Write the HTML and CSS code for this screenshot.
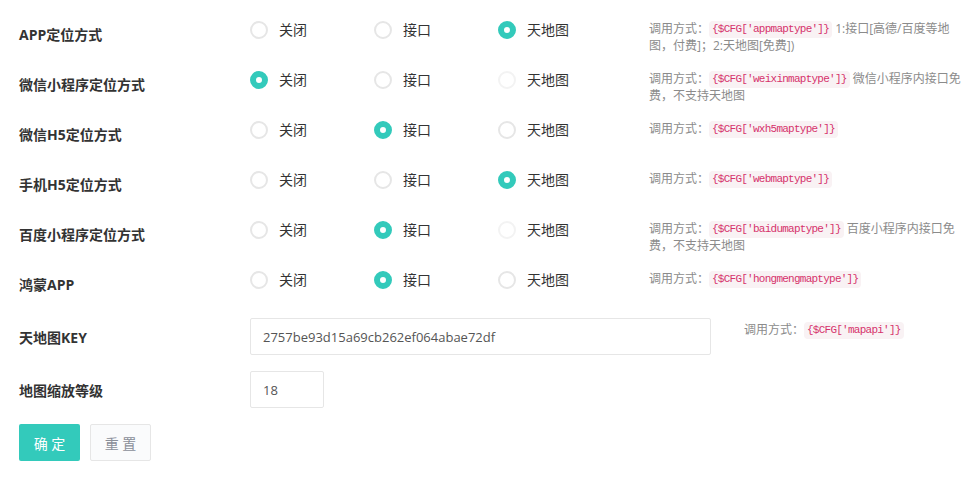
FILE: index.html
```html
<!DOCTYPE html>
<html lang="zh-CN">
<head>
    <meta charset="UTF-8">
    <meta name="viewport" content="width=device-width, initial-scale=1.0">
    <title>地图设置</title>
    <link rel="stylesheet" href="styles.css">
</head>
<body>
    <form class="config-form">
        <div class="form-item">
            <label class="form-label">APP定位方式</label>
            <div class="radio-group">
                <span class="radio"><i class="dot"></i>关闭</span>
                <span class="radio"><i class="dot"></i>接口</span>
                <span class="radio"><i class="dot on"></i>天地图</span>
            </div>
            <div class="form-tip">调用方式：<code>{$CFG['appmaptype']}</code> 1:接口[高德/百度等地图，付费]；2:天地图[免费])</div>
        </div>
        <div class="form-item">
            <label class="form-label">微信小程序定位方式</label>
            <div class="radio-group">
                <span class="radio"><i class="dot on"></i>关闭</span>
                <span class="radio"><i class="dot"></i>接口</span>
                <span class="radio"><i class="dot off"></i>天地图</span>
            </div>
            <div class="form-tip">调用方式：<code>{$CFG['weixinmaptype']}</code> 微信小程序内接口免费，不支持天地图</div>
        </div>
        <div class="form-item">
            <label class="form-label">微信H5定位方式</label>
            <div class="radio-group">
                <span class="radio"><i class="dot"></i>关闭</span>
                <span class="radio"><i class="dot on"></i>接口</span>
                <span class="radio"><i class="dot"></i>天地图</span>
            </div>
            <div class="form-tip">调用方式：<code>{$CFG['wxh5maptype']}</code></div>
        </div>
        <div class="form-item">
            <label class="form-label">手机H5定位方式</label>
            <div class="radio-group">
                <span class="radio"><i class="dot"></i>关闭</span>
                <span class="radio"><i class="dot"></i>接口</span>
                <span class="radio"><i class="dot on"></i>天地图</span>
            </div>
            <div class="form-tip">调用方式：<code>{$CFG['webmaptype']}</code></div>
        </div>
        <div class="form-item">
            <label class="form-label">百度小程序定位方式</label>
            <div class="radio-group">
                <span class="radio"><i class="dot"></i>关闭</span>
                <span class="radio"><i class="dot on"></i>接口</span>
                <span class="radio"><i class="dot off"></i>天地图</span>
            </div>
            <div class="form-tip">调用方式：<code>{$CFG['baidumaptype']}</code> 百度小程序内接口免费，不支持天地图</div>
        </div>
        <div class="form-item">
            <label class="form-label">鸿蒙APP</label>
            <div class="radio-group">
                <span class="radio"><i class="dot"></i>关闭</span>
                <span class="radio"><i class="dot on"></i>接口</span>
                <span class="radio"><i class="dot"></i>天地图</span>
            </div>
            <div class="form-tip">调用方式：<code>{$CFG['hongmengmaptype']}</code></div>
        </div>
        <div class="form-item input-row">
            <label class="form-label">天地图KEY</label>
            <input class="input input-key" type="text" value="2757be93d15a69cb262ef064abae72df">
            <div class="form-tip tip-side">调用方式：<code>{$CFG['mapapi']}</code></div>
        </div>
        <div class="form-item input-row">
            <label class="form-label">地图缩放等级</label>
            <input class="input input-zoom" type="text" value="18">
        </div>
        <div class="form-item input-row">
            <button type="button" class="btn btn-primary">确 定</button>
            <button type="reset" class="btn btn-default">重 置</button>
        </div>
    </form>
</body>
</html>
```

FILE: styles.css
```css
body {
    margin: 0;
    font-family: "Open Sans", "Noto Sans CJK SC", sans-serif;
    font-size: 14px;
    color: #333;
    background: #fff;
}
.config-form {
    padding: 5px 0 0 19px;
}
.form-item {
    display: flex;
    align-items: flex-start;
    height: 50px;
}
.form-label {
    width: 231px;
    flex-shrink: 0;
    margin-top: 20px;
    line-height: 20px;
    font-weight: bold;
}
.radio-group {
    display: flex;
    width: 399px;
    flex-shrink: 0;
    margin-top: 15px;
}
.radio {
    display: flex;
    align-items: center;
    width: 124px;
    line-height: 20px;
}
.radio:last-child {
    width: 151px;
}
.dot {
    box-sizing: border-box;
    width: 18px;
    height: 18px;
    margin-right: 11px;
    border: 2px solid #e6e6e6;
    border-radius: 50%;
}
.dot.on {
    border: 6px solid #33cabb;
    background: #fff;
}
.dot.off {
    border-color: #f3f3f3;
}
.form-tip {
    width: 318px;
    margin-top: 16px;
    font-size: 12px;
    line-height: 16px;
    color: #8b8b8b;
}
code {
    display: inline-block;
    padding: 0 3px;
    line-height: 17px;
    vertical-align: top;
    font-family: "Liberation Mono", monospace;
    font-size: 11px;
    letter-spacing: -0.75px;
    color: #d6336c;
    background: #f9f2f4;
    border-radius: 4px;
}
.input-row {
    align-items: center;
    height: 53px;
}
.config-form .input-row:nth-child(7) {
    margin-top: 5px;
}
.input-row .form-label {
    margin-top: 2px;
}
.input {
    box-sizing: border-box;
    height: 37px;
    padding: 0 12px;
    border: 1px solid #e6e6e6;
    border-radius: 2px;
    font-family: inherit;
    font-size: 13px;
    color: #555;
    outline: none;
}
.input-key {
    width: 461px;
}
.input-zoom {
    width: 74px;
}
.tip-side {
    width: auto;
    margin: 0 0 12px 33px;
}
.btn {
    box-sizing: border-box;
    height: 37px;
    padding: 0;
    border-radius: 2px;
    font-family: inherit;
    font-size: 14px;
    cursor: pointer;
}
.btn-primary {
    width: 61px;
    border: none;
    background: #33cabb;
    color: #fff;
}
.btn-default {
    width: 61px;
    margin-left: 10px;
    border: 1px solid #e6e6e6;
    background: #fafbfc;
    color: #8a8f99;
}
```
